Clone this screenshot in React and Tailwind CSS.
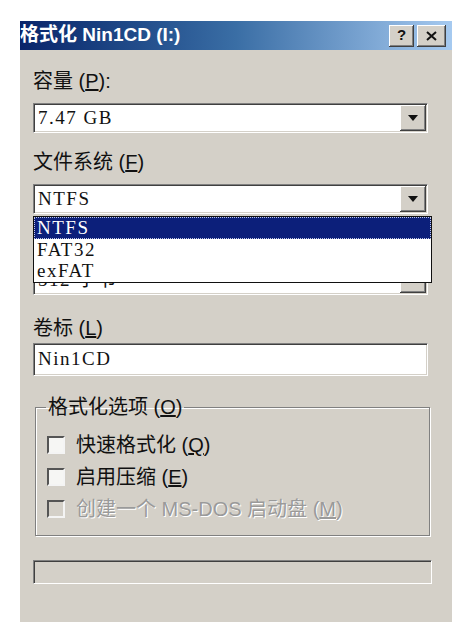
const cjk = "font-['Liberation_Sans','Noto_Sans_CJK_SC',sans-serif]";
const serif = "font-['Liberation_Serif','Noto_Sans_CJK_SC',serif]";

const sunken =
  "border border-t-[#808080] border-l-[#808080] border-b-white border-r-white shadow-[inset_1px_1px_0_#404040,inset_-1px_-1px_0_#d4d0c8]";
const raised =
  "bg-[#d4d0c8] shadow-[inset_-1px_-1px_0_#404040,inset_1px_1px_0_#ffffff,inset_-2px_-2px_0_#808080]";

const Label = ({ text, hot, suffix = "" }) => (
  <div className={`${cjk} text-[20px] leading-[24px] text-[#111]`}>
    {text} (<span className="underline">{hot}</span>){suffix}
  </div>
);

const Arrow = () => (
  <div className={`${raised} w-[26px] h-[26px] flex items-center justify-center`}>
    <svg width="10" height="6" viewBox="0 0 10 6">
      <path d="M0 0h10L5 6z" fill="#111" />
    </svg>
  </div>
);

const Combo = ({ value, className = "" }) => (
  <div className={`${sunken} bg-white h-[30px] w-[395px] flex items-center justify-between pl-[4px] pr-[1px] ${className}`}>
    <span className={`${serif} text-[19px] tracking-[1.5px] text-[#111]`}>{value}</span>
    <Arrow />
  </div>
);

const Check = ({ text, hot, disabled }) => (
  <div className="flex items-center h-[28px] gap-[11px]">
    <div
      className={`w-[18px] h-[18px] border-2 border-t-[#555] border-l-[#555] border-b-[#f4f4f4] border-r-[#f4f4f4] ${
        disabled ? "bg-[#d4d0c8]" : "bg-[#f6f6f4]"
      }`}
    />
    <span
      className={`${cjk} text-[20px] leading-[24px] ${
        disabled ? "text-[#9a9a9a] [text-shadow:1px_1px_0_#fff]" : "text-[#111]"
      }`}
    >
      {text} (<span className="underline">{hot}</span>)
    </span>
  </div>
);

export default function App() {
  return (
    <div className="min-h-[622px] bg-white pt-[21px] pl-[20px]">
      <div className="w-[432px] h-[601px] bg-[#d4d0c8] flex flex-col">
        <div className="h-[29px] bg-gradient-to-r from-[#0a246a] via-[#3a6ea5] to-[#a6caf0] flex items-center justify-between pr-[6px]">
          <span className={`${cjk} text-white font-bold text-[19px]`}>
            格式化 Nin1CD (I:)
          </span>
          <div className="flex gap-[3px]">
            <div className={`${raised} w-[25px] h-[22px] flex items-center justify-center ${cjk} font-bold text-[15px] text-[#111]`}>
              ?
            </div>
            <div className={`${raised} w-[29px] h-[22px] flex items-center justify-center`}>
              <svg width="11" height="10" viewBox="0 0 11 10">
                <path d="M1 1l9 8M10 1l-9 8" stroke="#111" strokeWidth="2" />
              </svg>
            </div>
          </div>
        </div>

        <div className="px-[13px] flex flex-col">
          <div className="mt-[19px]">
            <Label text="容量" hot="P" suffix=":" />
          </div>
          <Combo value="7.47 GB" className="mt-[10px]" />

          <div className="mt-[17px]">
            <Label text="文件系统" hot="F" />
          </div>
          <Combo value="NTFS" className="mt-[10px]" />

          <div className="relative">
            <div className="mt-[17px] h-[24px]" />
            <Combo value="512 字节" className="mt-[10px]" />
            <div className={`absolute left-0 top-[2px] w-[399px] bg-white border border-[#111] ${serif} text-[19px] tracking-[1.5px] leading-[21.5px] text-[#111]`}>
              <div className="bg-[#0c1f7a] text-white pl-[3px] outline-1 outline-dotted outline-[#c0c8e8] -outline-offset-1">NTFS</div>
              <div className="pl-[3px]">FAT32</div>
              <div className="pl-[3px]">exFAT</div>
            </div>
          </div>

          <div className="mt-[21px]">
            <Label text="卷标" hot="L" />
          </div>
          <div className={`${sunken} bg-white h-[33px] w-[395px] mt-[3px] flex items-center pl-[4px]`}>
            <span className={`${serif} text-[19px] tracking-[1.5px] text-[#111]`}>Nin1CD</span>
          </div>

          <fieldset className="mt-[19px] ml-[2px] w-[395px] h-[141px] border border-[#808080] shadow-[inset_1px_1px_0_#fff,1px_1px_0_#fff] pl-[11px] pt-[12px]">
            <legend className={`${cjk} text-[20px] leading-[24px] text-[#111] px-[2px] ml-[-1px]`}>
              格式化选项 (<span className="underline">O</span>)
            </legend>
            <div className="flex flex-col gap-[4px]">
              <Check text="快速格式化" hot="Q" />
              <Check text="启用压缩" hot="E" />
              <Check text="创建一个 MS-DOS 启动盘" hot="M" disabled />
            </div>
          </fieldset>

          <div className={`${sunken} mt-[24px] w-[399px] h-[24px] bg-[#d4d0c8]`} />
        </div>
      </div>
    </div>
  );
}
